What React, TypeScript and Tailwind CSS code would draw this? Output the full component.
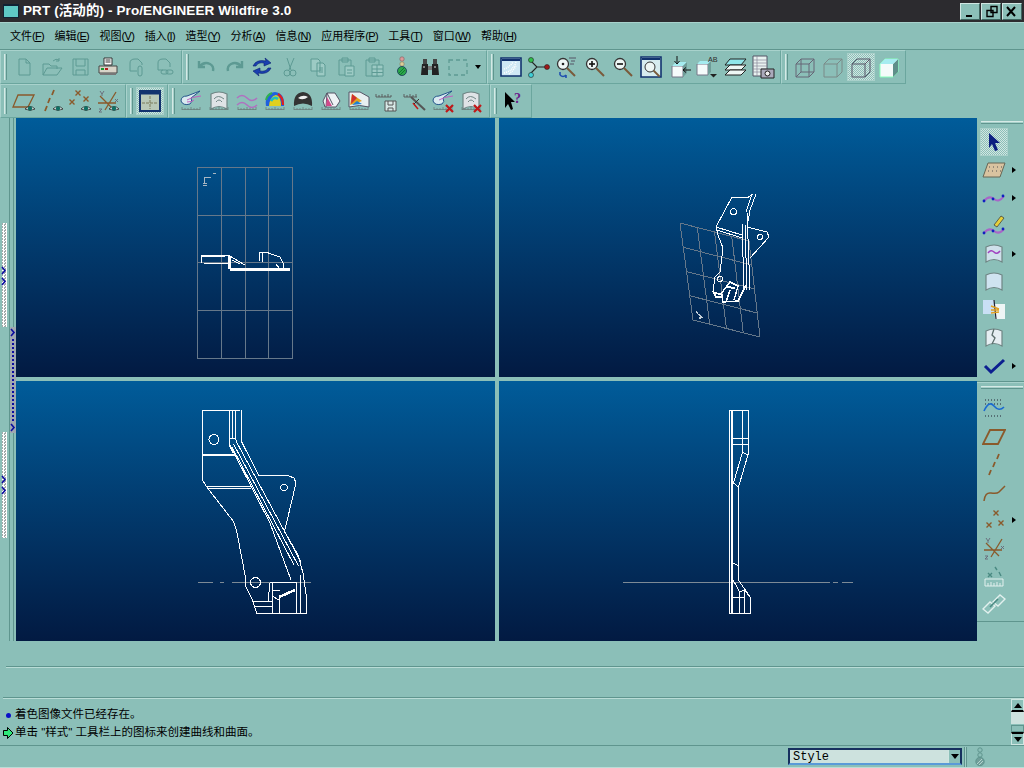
import type { ReactNode } from "react";

const FONT = "[font-family:'Liberation_Sans','Noto_Sans_CJK_SC',sans-serif]";
const D = "#5d9a93";
const BR = "#8a5a2b";

function Ico({ children, size = 24 }: { children: ReactNode; size?: number }) {
  return (
    <svg width={size} height={size} viewBox="0 0 24 24" fill="none" strokeWidth="1">
      {children}
    </svg>
  );
}

// eye badge used on the datum display icons
const Eye = ({ x = 13, y = 18 }: { x?: number; y?: number }) => (
  <g transform={`translate(${x} ${y})`}>
    <path d="M0 2Q5-3 10 2Q5 5 0 2z" fill="#e8f4f2" stroke="#222" strokeWidth=".8" />
    <circle cx="5" cy="1.4" r="2.2" fill="#0f6f63" />
  </g>
);

// small ruler at the foot of the analysis icons
const Ruler = () => (
  <path d="M3 20.5h18M3 18v3M6 19v2M9 19v2M12 18v3M15 19v2M18 19v2M21 18v3" stroke="#6b7f7c" strokeWidth=".8" />
);

const RedX = () => <path d="M15 16l7 7M22 16l-7 7" stroke="#c01818" strokeWidth="2.2" />;

const Cross = ({ x, y, c = BR }: { x: number; y: number; c?: string }) => (
  <path d={`M${x - 2.5} ${y - 2.5}l5 5M${x + 2.5} ${y - 2.5}l-5 5`} stroke={c} strokeWidth="1.4" />
);

const Csys = () => (
  <>
    <path d="M4 7l13 13M20 3L9 21M2 14h18" stroke={BR} strokeWidth="1.3" />
    <path d="M4 2l2 3 2-3M6 5v2M3 20h3l-3 3h3M19 10l3 3M22 10l-3 3" stroke="#667" strokeWidth=".9" />
  </>
);

const Magnifier = ({ sign, x = 9, y = 9 }: { sign?: "+" | "-"; x?: number; y?: number }) => (
  <>
    <circle cx={x} cy={y} r="5.5" fill="#eef7f5" stroke="#333" strokeWidth="1.3" />
    <path d={`M${x + 4} ${y + 4}l8 8`} stroke="#7a5a3a" strokeWidth="2" />
    {sign && <path d={`M${x - 3} ${y}h6`} stroke="#111" strokeWidth="1.6" />}
    {sign === "+" && <path d={`M${x} ${y - 3}v6`} stroke="#111" strokeWidth="1.6" />}
  </>
);

const Cube = ({ hidden, solid, c = "#667" }: { hidden?: boolean; solid?: boolean; c?: string }) => (
  <>
    <path d="M3 9l5-5h13v13l-5 5H3z" fill={solid ? "#f4fbfa" : "none"} stroke={solid ? "#8fb" : c} strokeWidth="1" />
    {solid && <path d="M16 9l5-5v13l-5 5z" fill="#5f8f8a" />}
    {solid && <path d="M3 9l5-5h13l-5 5z" fill="#a6ecf0" />}
    {!solid && <path d="M3 9h13v13M16 9l5-5" stroke={c} />}
    {hidden && <path d="M8 4v13h13M8 17l-5 5" stroke={c} />}
  </>
);

const Surf = ({ fill = "#cfe0ea" }: { fill?: string }) => (
  <path d="M4 5Q12 1 20 5V20Q12 15 4 20z" fill={fill} stroke="#6f8584" strokeWidth="1.2" />
);

const ROW1_A = [
  <path d="M7 4h7l4 4v12H7zM14 4v4h4" stroke={D} />,
  <>
    <path d="M3 20V9h6l2 2h6v3M3 20l4-7h15l-5 7z" stroke={D} />
    <path d="M13 6q3-3 6-1M19 3v3h-3" stroke={D} />
  </>,
  <>
    <path d="M5 4h15v16H5z" stroke={D} />
    <path d="M8 4v7h9V4M8 20v-5h9v5" stroke={D} />
  </>,
  <>
    <path d="M8 3h8v7H8z" fill="#fff" stroke="#333" />
    <path d="M9.5 5h5M9.5 7h5" stroke="#333" />
    <path d="M3 11h18v7H3z" fill="#d8d4c8" stroke="#444" />
    <path d="M5 14h3" stroke="#1a9a30" strokeWidth="2" />
    <path d="M9 14h3" stroke="#b02020" strokeWidth="2" />
    <path d="M4 19h16" stroke="#777" strokeWidth="2" />
  </>,
  <>
    <path d="M6 16V8q0-4 5-4h3l4 4v2M6 16h7" stroke={D} />
    <rect x="14" y="11" width="4" height="10" rx="2" stroke={D} />
  </>,
  <>
    <path d="M6 15V8q0-4 5-4h3l4 4v4M6 15h5" stroke={D} />
    <rect x="9" y="15" width="7" height="4" rx="2" stroke={D} />
    <rect x="14" y="15" width="7" height="4" rx="2" stroke={D} />
  </>,
];

const ROW1_B = [
  <path d="M5 6v6h6M5 12q5-6 11-3 4 2 3 7" stroke={D} strokeWidth="2.4" />,
  <path d="M20 6v6h-6M20 12q-5-6-11-3-4 2-3 7" stroke={D} strokeWidth="2.4" />,
  <>
    <path d="M3 11q3-7 13-5l-1-3 6 5-7 3v-3q-6-1-8 3z" fill="#1a3fb0" stroke="#0a1f70" strokeWidth=".6" />
    <path d="M21 13q-3 7-13 5l1 3-6-5 7-3v3q6 1 8-3z" fill="#1a3fb0" stroke="#0a1f70" strokeWidth=".6" />
  </>,
  <>
    <path d="M9 3l4 12M16 3l-5 12" stroke={D} />
    <circle cx="9" cy="18" r="3" stroke={D} />
    <circle cx="15" cy="18" r="3" stroke={D} />
  </>,
  <>
    <path d="M5 4h7l2 2v10H5zM11 8h6l2 2v11H11z" stroke={D} fill="#9ccac4" />
    <path d="M13 13h4M13 15h4M13 17h4" stroke={D} />
  </>,
  <>
    <path d="M5 5h12v15H5z" stroke={D} />
    <path d="M8 3h6v4H8z" stroke={D} />
    <path d="M11 11h9v10h-9z" stroke={D} fill="#9ccac4" />
    <path d="M13 15h5M13 18h5" stroke={D} />
  </>,
  <>
    <path d="M4 5h13v16H4z" stroke={D} />
    <path d="M7 3h6v4H7z" stroke={D} />
    <path d="M10 10h11v11H10zM10 14h11M10 17.5h11M15 10v11" stroke={D} fill="#9ccac4" />
  </>,
  <>
    <circle cx="12" cy="4" r="2.2" fill="#d99" stroke="#866" strokeWidth=".7" />
    <circle cx="12" cy="9" r="2.2" fill="#dc9" stroke="#886" strokeWidth=".7" />
    <circle cx="12" cy="16" r="4.5" fill="#2aa84a" stroke="#135" strokeWidth=".8" />
    <path d="M9 18l5-5M10 20l5-5" stroke="#0a6a2a" strokeWidth=".8" />
  </>,
  <>
    <path d="M4 9h6v11H3zM14 9h6l1 11h-7z" fill="#222" />
    <path d="M5 4h4v5H5zM15 4h4v5h-4z" fill="#444" />
    <path d="M10 11h4v4h-4z" fill="#777" />
    <path d="M5 12h2M16 12h2" stroke="#ddd" />
  </>,
  <path d="M3 5h18v15H3z" stroke={D} strokeWidth="1.3" strokeDasharray="4 3" />,
];

const ROW1_C = [
  <>
    <path d="M2 3h20v18H2z" fill="#cfe8f5" stroke="#12326e" strokeWidth="1.6" />
    <path d="M3 4h18v2H3z" fill="#12326e" />
    <path d="M5 18q9-2 12-11M10 19q4-3 7-8M5 14q6-2 9-7" stroke="#fff" strokeWidth="1.5" strokeDasharray="1 1" />
  </>,
  <>
    <path d="M3 5l7 7-7 7M10 12h10" stroke="#222" strokeWidth="1.1" />
    <circle cx="4" cy="5" r="2.5" fill="#2fbf4a" stroke="#222" strokeWidth=".6" />
    <circle cx="4" cy="20" r="2.5" fill="#3fd0d8" stroke="#222" strokeWidth=".6" />
    <circle cx="20" cy="12" r="2.5" fill="#a01818" stroke="#222" strokeWidth=".6" />
  </>,
  <>
    <Magnifier x={8} y={9} />
    <circle cx="8" cy="9" r="1.3" fill="#222" />
    <path d="M14 3h7M16 6h4M15 9h4" stroke="#556" />
    <path d="M5 20q3 3 6 0M5 20v-3M11 20v3" stroke="#2050b0" strokeWidth="1.6" />
  </>,
  <Magnifier sign="+" />,
  <Magnifier sign="-" />,
  <>
    <path d="M2 2h20v20H2z" fill="#d6ecef" stroke="#12326e" strokeWidth="1.6" />
    <path d="M3 3h18v2H3z" fill="#12326e" />
    <circle cx="11" cy="12" r="5" fill="#eef7f5" stroke="#333" />
    <path d="M14.5 15.5l6 6" stroke="#7a5a3a" strokeWidth="1.8" />
  </>,
  <>
    <path d="M5 11h11v11H5z" fill="#f5fbfb" stroke="#778" />
    <path d="M5 11l4-4h11l-4 4z" fill="#a6ecf0" />
    <path d="M16 11l4-4v11l-4 4z" fill="#6f9c98" />
    <path d="M10 1v8M7.5 6l2.5 3 2.5-3M24 15h-8M19 12.5l-3 2.5 3 2.5" stroke="#111" />
  </>,
  <>
    <path d="M2 9h11v11H2z" fill="#f5fbfb" stroke="#778" />
    <path d="M2 9l3-3h11l-3 3z" fill="#a6ecf0" />
    <path d="M13 9l3-3v11l-3 3z" fill="#6f9c98" />
    <text x="13" y="7" fontSize="8" fontFamily="Liberation Mono" fill="#333">AB</text>
    <path d="M15 19h7l-3.5 3.5z" fill="#222" />
  </>,
  <>
    <path d="M7 4h16l-5 6H2z" fill="#8fe6ea" stroke="#222" />
    <path d="M2 15l5-5h16l-5 5z" stroke="#222" fill="#eef7f5" />
    <path d="M2 20l5-5h16l-5 5z" stroke="#222" fill="#eef7f5" />
  </>,
  <>
    <path d="M2 1h14v20H2z" fill="#e8f2f0" stroke="#556" />
    <path d="M2 5h14M2 8h14M2 11h14M2 14h14M2 17h14M6 1v20" stroke="#889" strokeWidth=".7" />
    <path d="M10 14h13v9H10z" fill="#aab" stroke="#222" />
    <circle cx="16.5" cy="18.5" r="2.5" fill="#eee" stroke="#222" />
  </>,
];

const ROW1_D = [<Cube hidden />, <Cube c="#7a8a88" />, <Cube c="#556" />, <Cube solid />];

const ROW2_A = [
  <>
    <path d="M6 6h16l-6 12H1z" stroke={BR} strokeWidth="1.3" />
    <Eye />
  </>,
  <>
    <path d="M14 1l-2 5M10 9l-2 5M7 17l-2 5" stroke={BR} strokeWidth="1.8" />
    <Eye />
  </>,
  <>
    <Cross x={10} y={4} />
    <Cross x={18} y={10} />
    <Cross x={4} y={13} />
    <Eye />
  </>,
  <>
    <Csys />
    <Eye />
  </>,
];

const ROW2_C = [
  <>
    <path d="M2 12q0-5 6-5l13-5-9 7q2 4-1 6-7 2-9-3z" fill="#d9eaf0" stroke="#24558a" />
    <path d="M8 11q4-3 14-4M8 13q5 0 7-2" stroke="#c060c0" />
    <Ruler />
  </>,
  <>
    <Surf fill="#dfe3e6" />
    <path d="M7 10q4-5 10 0M9 13q3-4 6 0" stroke="#6f8584" />
    <Ruler />
  </>,
  <>
    <path d="M2 9q5-5 10 0t10 0M2 16q5-5 10 0t10 0" stroke="#b070c0" strokeWidth="1.5" />
    <Ruler />
  </>,
  <>
    <path d="M3 17Q1 4 12 3q10 1 9 14z" fill="#2060e0" />
    <path d="M6 17Q7 7 13 6q5 1 5 11z" fill="#e0d020" />
    <path d="M8 12q3-5 7-2" stroke="#20c0c0" strokeWidth="2.5" />
    <path d="M15 5q5 3 5 11" stroke="#e02020" strokeWidth="2.2" />
    <path d="M3 11q1-5 6-7" stroke="#30b050" strokeWidth="2" />
    <Ruler />
  </>,
  <>
    <path d="M3 17Q2 4 12 3q10 1 9 14q-9-5-18 0z" fill="#333" />
    <path d="M7 9q5-4 10-1-5 4-10 1z" fill="#eee" />
    <Ruler />
  </>,
  <>
    <path d="M8 4h8l5 8-4 6H6L4 12z" fill="#eef3f5" stroke="#556" />
    <path d="M8 4l-1 14M8 4l6 12" stroke="#556" />
    <path d="M8 8l5 9H7z" fill="#d04a8a" />
    <Ruler />
  </>,
  <>
    <path d="M2 3l11 0 9 5v10q-9-3-20 0z" fill="#e8eff0" stroke="#556" />
    <path d="M3 16L5 5l10 7z" fill="#e0a020" />
    <path d="M4 15L5 5l5 4z" fill="#d03030" />
    <path d="M5 16l5-4 5 3z" fill="#2080d0" />
    <Ruler />
  </>,
  <>
    <path d="M1 8h15M1 5v3M4 6v2M7 5v3M10 6v2M13 5v3M16 6v2" stroke="#555" strokeWidth=".9" />
    <path d="M10 12h11v10H10z" fill="#d8e8e6" stroke="#555" />
    <path d="M13 12v4h5v-4M13 22v-3h5v3" stroke="#555" />
  </>,
  <>
    <path d="M1 8h13M1 5v3M4 6v2M7 5v3M10 6v2M13 5v3" stroke="#555" strokeWidth=".9" />
    <path d="M8 8l14 13" stroke="#555" strokeWidth="2" />
    <path d="M10 14l5 6" stroke="#c01818" strokeWidth="1.5" />
    <path d="M16 10l-5 5" stroke="#333" />
  </>,
  <>
    <path d="M2 12q0-5 6-5l13-5-9 7q2 4-1 6-7 2-9-3z" fill="#d9eaf0" stroke="#24558a" />
    <path d="M8 11q4-3 14-4" stroke="#c060c0" />
    <Ruler />
    <RedX />
  </>,
  <>
    <Surf fill="#dfe3e6" />
    <path d="M7 10q4-5 10 0M9 13q3-4 6 0" stroke="#6f8584" />
    <Ruler />
    <RedX />
  </>,
];

const RIGHT_A = [
  { i: <path d="M7 3l11 10h-5l3 7-3 1-3-7-3 4z" fill="#0c1f80" /> },
  {
    i: (
      <>
        <path d="M6 5h17l-5 14H1z" fill="#d9c3a0" stroke="#665" />
        <path d="M7 9h1M11 9h1M15 9h1M19 9h1M6 13h1M10 13h1M14 13h1M18 13h1" stroke="#555" />
      </>
    ),
    more: true,
  },
  {
    i: (
      <>
        <path d="M2 15q5-6 10-2t10-3" stroke="#a866c8" strokeWidth="2" />
        <circle cx="2" cy="15" r="1.4" fill="#1020c0" />
        <circle cx="11" cy="13" r="1.4" fill="#1020c0" />
        <circle cx="21" cy="10" r="1.4" fill="#1020c0" />
      </>
    ),
    more: true,
  },
  {
    i: (
      <>
        <path d="M2 19q5-6 10-2t10-2" stroke="#a866c8" strokeWidth="2" />
        <circle cx="2" cy="19" r="1.4" fill="#1020c0" />
        <circle cx="11" cy="17" r="1.4" fill="#1020c0" />
        <circle cx="21" cy="15" r="1.4" fill="#1020c0" />
        <path d="M12 11l7-9 3 2-7 9z" fill="#e6d03a" stroke="#333" strokeWidth=".7" />
      </>
    ),
  },
  {
    i: (
      <>
        <Surf fill="#cfe0ea" />
        <path d="M6 11q3-4 6-1t6-1" stroke="#a040c0" strokeWidth="1.5" />
      </>
    ),
    more: true,
  },
  { i: <Surf fill="#cfe3f0" /> },
  {
    i: (
      <>
        <path d="M1 2h11l1 14H1z" fill="#c9dff5" />
        <path d="M12 6h11v15H13z" fill="#eef5f5" />
        <path d="M12 2l2 19" stroke="#223" strokeWidth="1.2" />
        <path d="M9 8l8 3M9 12l8 0M9 15l8-1" stroke="#e0a020" strokeWidth="1.4" />
      </>
    ),
  },
  {
    i: (
      <>
        <Surf fill="#e6eef2" />
        <path d="M12 3l-2 6 3 3-3 6" stroke="#5a6c6a" strokeWidth="1.3" />
      </>
    ),
  },
  { i: <path d="M3 12l6 6L22 6" stroke="#0c1f90" strokeWidth="3" />, more: true },
];

const RIGHT_B = [
  {
    i: (
      <>
        <path d="M3 4h18M3 20h18M3 8h18" stroke="#223" strokeWidth="1.2" strokeDasharray="1 2" />
        <path d="M2 15q5-11 10-5t10 1" stroke="#1a6ad0" strokeWidth="1.6" />
      </>
    ),
  },
  { i: <path d="M8 6h15l-7 14H1z" stroke={BR} strokeWidth="1.8" /> },
  { i: <path d="M17 2l-2 5M13 10l-2 5M9 18l-2 5" stroke={BR} strokeWidth="1.8" /> },
  { i: <path d="M2 21q1-9 7-8t8-1 6-6" stroke={BR} strokeWidth="1.5" /> },
  {
    i: (
      <>
        <Cross x={14} y={5} />
        <Cross x={19} y={15} />
        <Cross x={7} y={17} />
      </>
    ),
    more: true,
  },
  { i: <Csys /> },
  {
    i: (
      <>
        <path d="M3 15h18v7H3zM6 19v3M9 18v4M12 19v3M15 18v4M18 19v3" stroke="#e2f0ee" />
        <path d="M6 9l4 4M10 9l-4 4M13 3l2 3M17 8l2 4" stroke="#4a8a82" strokeWidth="1.4" />
      </>
    ),
  },
  {
    i: (
      <>
        <path d="M1 17l7-7 5 4-7 7z" stroke="#e2f0ee" strokeWidth="1.4" />
        <path d="M11 10l7-7 5 4-7 7z" stroke="#e2f0ee" strokeWidth="1.4" />
        <path d="M8 15l8-8" stroke="#4a8a82" strokeWidth="1.6" />
      </>
    ),
  },
];

function Grip() {
  return <div className="w-[3px] h-[26px] flex-none bg-[#a5cfc9] border-l border-[#d5e9e5] border-r-[#5f958e] border-r" />;
}

const SELECTED =
  "bg-[repeating-conic-gradient(#d2e6e2_0_25%,#8cbfb8_0_50%)] bg-[length:2px_2px] border border-[#a9d0ca]";

function Btn({ children, active }: { children: ReactNode; active?: boolean }) {
  return (
    <div className={`w-7 h-7 flex-none flex items-center justify-center ${active ? SELECTED : ""}`}>
      <Ico>{children}</Ico>
    </div>
  );
}

function Group({ width, icons, active, pad = "gap-[3px] pl-[3px]", extra }: {
  width: string;
  icons: ReactNode[];
  active?: number;
  pad?: string;
  extra?: ReactNode;
}) {
  return (
    <div className={`${width} h-full flex-none flex items-center ${pad} border border-[#6ba69e] border-t-[#a8d2cc] border-l-[#a8d2cc]`}>
      <Grip />
      <div className="flex items-center">
        {icons.map((ic, n) => (
          <Btn key={n} active={n === active}>
            {ic}
          </Btn>
        ))}
        {extra}
      </div>
    </div>
  );
}

const MENU: [string, string][] = [
  ["文件", "F"],
  ["编辑", "E"],
  ["视图", "V"],
  ["插入", "I"],
  ["造型", "Y"],
  ["分析", "A"],
  ["信息", "N"],
  ["应用程序", "P"],
  ["工具", "T"],
  ["窗口", "W"],
  ["帮助", "H"],
];

// gridded sketch plane of the tilted view
function tiltedGrid() {
  const a = [680, 223];
  const b = [749, 241];
  const c = [760, 337];
  const d = [693, 320];
  const mix = (p: number[], q: number[], t: number) => [p[0] + (q[0] - p[0]) * t, p[1] + (q[1] - p[1]) * t];
  let out = "";
  for (let n = 0; n <= 4; n++) {
    const t = n / 4;
    const p = mix(a, b, t);
    const q = mix(d, c, t);
    const r = mix(a, d, t);
    const s = mix(b, c, t);
    out += `M${p[0]} ${p[1]}L${q[0]} ${q[1]}M${r[0]} ${r[1]}L${s[0]} ${s[1]}`;
  }
  return out;
}

const GRID = "#66788a";
const AXIS = "#7d8a96";

function View({ box, children }: { box: string; children: ReactNode }) {
  return (
    <div className="bg-gradient-to-b from-[#005c9a] to-[#021a42]">
      <svg className="block w-full h-full" viewBox={box} fill="none" stroke="#fff" strokeWidth="1" shapeRendering="crispEdges">
        {children}
      </svg>
    </div>
  );
}

function Chevron() {
  return (
    <svg width="6" height="9" viewBox="0 0 6 9" className="-ml-[1px] flex-none">
      <path d="M1 1l3 3.5-3 3.5" fill="none" stroke="#0c0ca0" strokeWidth="1.6" />
    </svg>
  );
}

const DOTS = "bg-[repeating-conic-gradient(#ffffff_0_25%,#a0a8a8_0_50%)] bg-[length:3px_3px]";

export default function App() {
  return (
    <div className={`w-[1024px] h-[768px] overflow-hidden flex flex-col bg-[#8bbfb8] text-black ${FONT}`}>
      {/* title bar */}
      <div className="h-[22px] flex-none flex items-center bg-[#2c2b2f] pl-[3px] pr-[2px]">
        <div className="w-4 h-[14px] bg-[#5fc8c4] border border-t-2 border-[#123] mr-1" />
        <span className="text-white text-[13.5px] font-bold tracking-[0.1px]">PRT (活动的) - Pro/ENGINEER Wildfire 3.0</span>
        <div className="ml-auto flex gap-[1px]">
          {[
            <path d="M3 11h6" stroke="#000" strokeWidth="2" />,
            <path d="M7 1.5h6v6H7zM3 5.5h6v6H3z" stroke="#000" strokeWidth="1.4" fill="#8bbfb8" />,
            <path d="M2 2l8 9M10 2l-8 9" stroke="#000" strokeWidth="2" />,
          ].map((g, n) => (
            <div
              key={n}
              className="w-[20px] h-[17px] flex items-center justify-center bg-[#8bbfb8] border border-[#d0e6e2] border-r-[#3f6660] border-b-[#3f6660]"
            >
              <svg width="14" height="13" viewBox="0 0 14 13" fill="none">
                {g}
              </svg>
            </div>
          ))}
        </div>
      </div>

      {/* menu bar */}
      <div className="h-[28px] flex-none flex items-center gap-[10.5px] pl-[10px] border-y border-t-[#a8d2cc] border-b-[#5f958e] text-[11px]">
        {MENU.map(([t, k]) => (
          <span key={k} className="whitespace-nowrap">
            {t}
            <span className="tracking-[-0.7px]">
              (<span className="underline">{k}</span>)
            </span>
          </span>
        ))}
      </div>

      {/* toolbars */}
      <div className="h-[34px] flex-none flex">
        <Group width="w-[182px]" icons={ROW1_A} />
        <Group
          width="w-[305px]"
          icons={ROW1_B}
          extra={<div className="w-0 h-0 ml-[3px] border-x-[3.5px] border-x-transparent border-t-[4px] border-t-black" />}
        />
        <Group width="w-[294px]" icons={ROW1_C} />
        <Group width="w-[125px]" icons={ROW1_D} active={2} />
      </div>
      <div className="h-[34px] flex-none flex">
        <Group width="w-[126px]" icons={ROW2_A} />
        <Group
          width="w-[42px]"
          active={0}
          icons={[
            <>
              <path d="M2 2h20v20H2z" fill="#b9c8b8" stroke="#12326e" strokeWidth="2" />
              <path d="M3 4h18" stroke="#12326e" strokeWidth="3" />
              <path d="M12 7v13M4 14h16" stroke="#7a7a5a" strokeDasharray="3 1" />
            </>,
          ]}
        />
        <Group width="w-[322px]" pad="gap-[2px] pl-[3px]" icons={ROW2_C} />
        <Group
          width="w-[42px]"
          icons={[
            <>
              <path d="M3 3l10 10H9l2 7-2 1-3-6-3 4z" fill="#000" />
              <text x="12" y="14" fontSize="14" fontWeight="bold" fontFamily="Liberation Serif" fill="#6a1a8a">?</text>
            </>,
          ]}
        />
      </div>

      {/* graphics area */}
      <div className="h-[523px] flex-none flex">
        <div className="w-4 flex-none relative">
          <div className="absolute left-[9px] top-0 bottom-0 w-[5px] border-x border-[#5f958e]" />
          <div className={`absolute left-[2px] top-[105px] w-[5px] h-[104px] ${DOTS} flex flex-col items-start pt-[43px] gap-[2px]`}>
            <Chevron />
            <Chevron />
          </div>
          <div className={`absolute left-[2px] top-[314px] w-[5px] h-[106px] ${DOTS} flex flex-col items-start pt-[43px] gap-[2px]`}>
            <Chevron />
            <Chevron />
          </div>
          <div className="absolute left-[10px] top-[209px] w-[6px] h-[106px] bg-[#a0a8b0] flex flex-col justify-between items-center py-[1px]">
            <Chevron />
            <div className="flex-1 w-[1px] my-[2px] border-l-2 border-dotted border-[#0c0ca0]" />
            <Chevron />
          </div>
        </div>

        <div className="w-[961px] flex-none grid grid-cols-[479px_478px] grid-rows-[259px_260px] gap-[4px]">
          <View box="16 118 479 259">
            <path
              d="M197.5 167.5H292.5V358.5H197.5ZM221.5 167.5V358.5M245.5 167.5V358.5M268.5 167.5V358.5M197.5 215.5H292.5M197.5 262.5H292.5M197.5 310.5H292.5"
              stroke={GRID}
            />
            <path d="M204.5 184v-6.5h6M213 174l3-1M203 183.5h4M203 185.5h4" stroke="#a9b6c2" />
            <path d="M201.5 263V255.5H229L245 265M204 263.5H228M229 256V268" />
            <path d="M230 269H290" strokeWidth="3" />
            <path d="M229 256V269" strokeWidth="3" />
            <path d="M259.5 261V252.5H267L280 257L283 263V268M262.5 253V262M232 260L240 264M276 264l3 4" />
            <path d="M201 256H225" strokeWidth="2" />
          </View>
          <View box="499 118 478 259">
            <path d={tiltedGrid()} stroke={GRID} />
            <path d="M696 311l2 3 5 4M699 318h2" stroke="#c5d0d8" strokeWidth="1.2" />
            <path d="M716 227L732 197L747 198L753 194M756 194L750 210L747 227L767 232L769 237L750 258M716 227L718 235L723 248L720 272L715 277L713 292" />
            <path d="M716 227L742 235M717 230L742 238" />
            <path d="M742 223L744 290M747 213L750 290M745 225L747 290M752 194L746 212" />
            <circle cx="733.5" cy="211.5" r="3" />
            <circle cx="760" cy="237" r="2.5" />
            <circle cx="720" cy="279" r="2.5" />
            <path d="M713 292L722 295L723 302L738 301L746 285M720 295L730 282L738 286L734 300M726 302L730 290M713 291L716 297L722 297" strokeWidth="1.4" />
            <path d="M726 287L735 288" strokeWidth="2" />
          </View>
          <View box="16 381 479 260">
            <path d="M198 582.5H213M220 582.5H224M232 582.5H311" stroke={AXIS} />
            <path d="M202.5 410H240M202.5 410V480L206 486L233.5 521.5L236.5 530L245 575V585L252.5 600L256.5 613H306.5V597L303 573L298 555L284.5 531.5L296 483L294 478L286.5 475H258.5L241.5 441.5V410" />
            <path d="M229.5 410V438M232 410V438M235 410V438M229.5 438H235L237 442M229.5 438V444L235 455" />
            <path d="M236 441L301 562M233.5 444L298.5 566M232 447L294 565M235 455L270 523L291 580M229 445L233 453" />
            <path d="M203 454.5H235M203 455.5H235M206 486.5H252M207 488.5H251" />
            <path d="M270 582.5H296.5V613M272.5 583V613M279.5 597V613M270 583L268 602M272 613H256M296.5 590V613M300 575V613" />
            <path d="M279 597L295 590" strokeWidth="2.5" />
            <path d="M253 601.5H272M254.5 606.5H272M279 600L272 596M272.5 590H280" />
            <circle cx="214" cy="439.5" r="5" />
            <circle cx="255.5" cy="582.5" r="5" />
            <ellipse cx="284" cy="487.5" rx="3.5" ry="3" />
          </View>
          <View box="499 381 478 260">
            <path d="M623 582.5H830M833 582.5H838M842 582.5H853" stroke={AXIS} />
            <path d="M729.5 410H748.5V453L738.5 487V580L750 597V613.5H729.5Z" />
            <path d="M731.5 410V613.5" strokeWidth="2" />
            <path d="M742.5 410V452M731 438.5H748M731 444H748" />
            <path d="M742.5 452L733.5 483L738.5 487M742.5 452L748 455M733.5 563L738.5 566M733 580L739.5 591.5M739.5 592L744.5 590L750 597M739.5 592V613M744.5 590V613M731 597H744.5" />
          </View>
        </div>

        <div className="flex-1 flex flex-col">
          <div className="h-[264px] flex-none flex flex-col items-start pl-[3px] border-b border-[#5f958e]">
            <div className="w-[42px] h-[3px] mt-[3px] mb-[4px] ml-[1px] bg-[#a5cfc9] border-t border-[#d5e9e5] border-b border-b-[#5f958e]" />
            {RIGHT_A.map((b, n) => (
              <div key={n} className="flex items-center">
                <Btn active={n === 0}>{b.i}</Btn>
                {b.more && <div className="ml-[4px] w-0 h-0 border-y-[3.5px] border-y-transparent border-l-[4px] border-l-black" />}
              </div>
            ))}
          </div>
          <div className="h-[240px] flex-none flex flex-col items-start pl-[3px] border-t border-[#a8d2cc] border-b border-b-[#5f958e]">
            <div className="w-[42px] h-[3px] mt-[3px] mb-[5px] ml-[1px] bg-[#a5cfc9] border-t border-[#d5e9e5] border-b border-b-[#5f958e]" />
            {RIGHT_B.map((b, n) => (
              <div key={n} className="flex items-center">
                <Btn>{b.i}</Btn>
                {b.more && <div className="ml-[4px] w-0 h-0 border-y-[3.5px] border-y-transparent border-l-[4px] border-l-black" />}
              </div>
            ))}
          </div>
        </div>
      </div>

      {/* message area */}
      <div className="h-[25px] flex-none" />
      <div className="h-[2px] flex-none ml-[6px] bg-[#5f958e] border-b border-[#b9dcd6]" />
      <div className="h-[29px] flex-none" />
      <div className="h-[2px] flex-none ml-[3px] bg-[#5f958e] border-b border-[#b9dcd6]" />
      <div className="h-[46px] flex-none flex">
        <div className="flex-1 pt-[7px] text-[11.5px]">
          <div className="h-[18px] flex items-center">
            <span className="w-[15px] flex justify-center pl-[2px]">
              <span className="w-[5px] h-[5px] rounded-full bg-[#0a10c8]" />
            </span>
            着色图像文件已经存在。
          </div>
          <div className="h-[18px] flex items-center">
            <svg width="15" height="14" viewBox="0 0 15 14" className="flex-none">
              <path d="M3.5 4.5H7.5V1.5L13 7L7.5 12.5V9.5H3.5z" fill="#2fe87a" stroke="#000" />
            </svg>
            单击 "样式" 工具栏上的图标来创建曲线和曲面。
          </div>
        </div>
        <div className="w-[13px] flex-none flex flex-col">
          {[0, 1].map((n) => (
            <div key={n} className={`h-[13px] flex-none flex items-center justify-center bg-[#8bbfb8] border border-[#d0e6e2] ${n ? "order-3 border-t-black border-t-2" : "border-b-black border-b-2"}`}>
              <div className={`w-0 h-0 border-x-[4px] border-x-transparent ${n ? "border-t-[5px] border-t-black" : "border-b-[5px] border-b-black"}`} />
            </div>
          ))}
          <div className="order-2 flex-1 flex flex-col">
            <div className="h-[12px] bg-[#cde2de]" />
            <div className="flex-1 border border-[#5f958e] mt-[1px]" />
          </div>
        </div>
      </div>

      {/* status row */}
      <div className="h-[23px] flex-none flex items-center border-t border-[#5f958e] border-b border-b-[#b9dcd6] pl-[788px]">
        <div className="w-[174px] h-[17px] flex-none flex border-2 border-[#16305e] border-b-[#5a9ad8] border-r-[#16305e] bg-[#cde2de]">
          <span className="flex-1 pl-[3px] text-[12px] leading-[14px] [font-family:'Liberation_Mono',monospace]">Style</span>
          <div className="w-[12px] flex items-center justify-center bg-[#8bbfb8] border-l border-[#d0e6e2]">
            <div className="w-0 h-0 border-x-[4px] border-x-transparent border-t-[5px] border-t-black" />
          </div>
        </div>
        <div className="w-[3px] h-[20px] ml-[2px] flex-none bg-[#a5cfc9] border-x border-x-[#5f958e]" />
        <svg width="12" height="20" viewBox="0 0 12 20" fill="none" stroke="#5f958e" className="ml-[7px] flex-none">
          <circle cx="6" cy="3" r="2.2" />
          <circle cx="6" cy="8" r="2.2" />
          <circle cx="6" cy="14.5" r="4.2" fill="#6f9f9a" />
          <path d="M3 17l5-5M5 18l4-4" stroke="#d5e9e5" strokeWidth=".7" />
        </svg>
      </div>
    </div>
  );
}
